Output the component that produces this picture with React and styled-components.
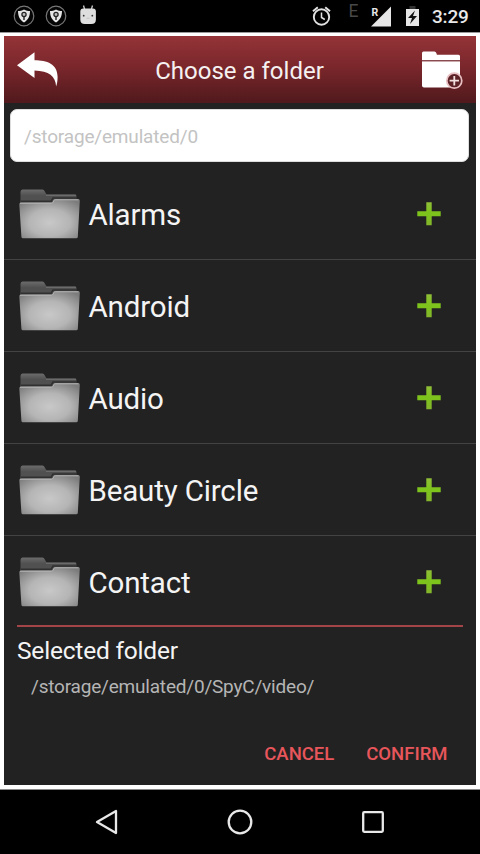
import React, {useState} from 'react';
import styled, {createGlobalStyle} from 'styled-components';

const GlobalStyle = createGlobalStyle`
    * {
        box-sizing: border-box;
    }

    body {
        margin: 0;
        background: #000;
        font-family: Roboto, "Liberation Sans", sans-serif;
    }

    button {
        padding: 0;
        border: none;
        background: none;
        font-family: inherit;
    }

    svg {
        display: block;
        flex: none;
    }
`;

const Screen = styled.div`
    width: 480px;
    height: 854px;
    display: flex;
    flex-direction: column;
    background: #000;
    overflow: hidden;
`;

const StatusBar = styled.div`
    height: 32px;
    flex: none;
    display: flex;
    justify-content: space-between;
    padding: 0 11px 0 13px;
`;

const Clock = styled.span`
    width: 37px;
    margin-left: 12px;
    color: #e8e8e8;
    font-size: 19px;
    font-weight: 500;
    line-height: 34px;
    letter-spacing: -0.2px;
`;

const StatusGroup = styled.div`
    display: flex;
`;

const Frame = styled.div`
    height: 758px;
    flex: none;
    padding: 3px 4px 4px;
    background: #fff;
    border-top: 1px solid #999;
    border-bottom: 1px solid #8a8a8a;
`;

const Panel = styled.div`
    height: 100%;
    display: flex;
    flex-direction: column;
    background: #222;
`;

const Header = styled.header`
    height: 67px;
    flex: none;
    display: flex;
    align-items: center;
    justify-content: space-between;
    padding: 0 12px;
    background: linear-gradient(#943438, #7b272c 45%, #50191c);
`;

const Title = styled.h1`
    margin: 2px 0 0 1px;
    color: #f5f1f1;
    font-size: 24px;
    font-weight: 400;
    line-height: 28px;
`;

const PathInput = styled.input`
    height: 53px;
    flex: none;
    margin: 6px 7px 6px 6px;
    padding: 2px 14px 0 13px;
    border: 1px solid #ddd;
    border-radius: 7px;
    outline: none;
    background: #fff;
    font-family: inherit;
    font-size: 19px;
    letter-spacing: -0.17px;

    &::placeholder {
        color: #c3c3c3;
        opacity: 1;
    }
`;

const FolderList = styled.ul`
    height: 457px;
    flex: none;
    margin: 0;
    padding: 0;
    list-style: none;
    overflow: hidden;
`;

const FolderRow = styled.li`
    height: 92px;
    display: flex;
    align-items: center;
    padding: 0 34px 0 14px;
    border-bottom: 1px solid #434343;
`;

const FolderName = styled.span`
    flex: 1;
    padding: 2px 0 0 8.5px;
    color: #f4f4f4;
    font-size: 29.5px;
    line-height: 36px;
    letter-spacing: -0.15px;
`;

const Footer = styled.footer`
    flex: 1;
    display: flex;
    flex-direction: column;
    margin: 0 13px;
    border-top: 2px solid #a24448;
`;

const SelectedLabel = styled.div`
    margin-top: 9px;
    color: #f4f4f4;
    font-size: 24.5px;
    line-height: 30px;
    letter-spacing: -0.2px;
`;

const SelectedPath = styled.div`
    margin: 9px 0 0 14px;
    color: #b5b5b5;
    font-size: 19px;
    line-height: 24px;
    letter-spacing: -0.2px;
`;

const Actions = styled.div`
    display: flex;
    justify-content: flex-end;
    gap: 32px;
    margin: 43px 15.5px 0 0;
`;

const ActionButton = styled.button`
    color: #e8565b;
    font-size: 18.5px;
    font-weight: 500;
    line-height: 24px;
`;

const NavBar = styled.nav`
    flex: 1;
    display: flex;
    justify-content: center;
    align-items: center;
    gap: 105px;
`;

const ShieldIcon = () => (
    <svg width="32" height="32" viewBox="0 0 32 32">
        <circle cx="11" cy="16" r="9.8" fill="#050505" stroke="#777" strokeWidth="1.2"/>
        <path d="M11 9.500c2 1.200 4 1.600 6 1.600 0 5-1.700 9-6 11.400-4.300-2.400-6-6.400-6-11.400 2 0 4-.4 6-1.600z" fill="#e6e6e6"/>
        <circle cx="11" cy="14.500" r="2.100" fill="#bbb" stroke="#222" strokeWidth="1.300"/>
        <path d="M11 16.500v3.500" stroke="#222" strokeWidth="1.400"/>
    </svg>
);

const RobotIcon = () => (
    <svg width="20" height="32" viewBox="77 0 20 32">
        <path d="M83.500 5.500l1.200 4M92.500 5.500l-1.200 4" stroke="#ccc" strokeWidth="1.300"/>
        <path d="M80.300 11.500q0-3 3-3h9.600q3 0 3 3v8q0 4.500-4.500 4.500h-6.600q-4.500 0-4.500-4.500z" fill="#dedede"/>
        <circle cx="83.700" cy="15.700" r=".9" fill="#333"/>
        <circle cx="92.300" cy="15.700" r=".9" fill="#333"/>
        <path d="M86.500 18.200h3" stroke="#c4c4c4"/>
    </svg>
);

const SignalIcons = () => (
    <svg width="112" height="32" viewBox="308 0 112 32">
        {/* alarm */}
        <g fill="none" stroke="#e2e2e2">
            <circle cx="321.500" cy="17" r="7.700" strokeWidth="1.900"/>
            <path d="M321.500 12.500v5l3.300 2" strokeWidth="1.500"/>
            <path d="M313 11.300l4.800-4M330 11.300l-4.800-4" strokeWidth="2"/>
        </g>
        <text x="348.500" y="17.300" fill="#484848" fontSize="17.500">E</text>
        {/* roaming signal */}
        <path d="M391 6.500v20h-20z" fill="#e6e6e6"/>
        <text x="371.500" y="16" fill="#e6e6e6" fontSize="10.500" fontWeight="700">R</text>
        {/* charging battery */}
        <path d="M409.500 6h6v3h-6z" fill="#333"/>
        <path d="M406 9h13v17h-13z" fill="#e6e6e6"/>
        <path d="M415 10.500l-7 7.500h4l-2 6 7-8h-4z" fill="#111"/>
    </svg>
);

const BackArrow = () => (
    <svg width="42" height="36" viewBox="16 52 42 36">
        <path d="M17 65.300L34.500 52.300v8C47 60.300 57.500 64 57.600 77c0 4-.6 7-1.500 9.500-.5-10.500-7.100-15.500-21.600-16v7.500z" fill="#fff"/>
    </svg>
);

const NewFolderIcon = () => (
    <svg width="44" height="42" viewBox="420 49 44 42">
        <path d="M422 60v-7q0-1.500 1.500-1.500h11q1.300 0 1.800 1.500l.6 1.700h21.600q1.500 0 1.500 1.500V60z" fill="#fff"/>
        <path d="M422 61.300h38V85.500q0 2-2 2h-34q-2 0-2-2z" fill="#fff"/>
        <path d="M422 60.600h38" stroke="#8a4b50" strokeWidth="1.200"/>
        <circle cx="454.300" cy="80.700" r="7.500" fill="#5c2226" stroke="#e8bfc2" strokeWidth="1.700"/>
        <path d="M454.300 76v9.400M449.600 80.700h9.400" stroke="#f4dfe0" strokeWidth="1.800"/>
    </svg>
);

const FolderIcon = () => (
    <svg width="62" height="52" viewBox="18 188 62 52">
        <defs>
            <linearGradient id="folderBack" x1="0" y1="0" x2="0" y2="1">
                <stop offset="0" stopColor="#6c6c6c"/>
                <stop offset=".3" stopColor="#505050"/>
            </linearGradient>
            <radialGradient id="folderFront" cx=".5" cy=".6" r=".68">
                <stop offset="0" stopColor="#c8c8c8"/>
                <stop offset=".5" stopColor="#b5b5b5"/>
                <stop offset="1" stopColor="#7c7c7c"/>
            </radialGradient>
        </defs>
        <path d="M20.500 210v-18q0-2.500 2-2.500h20q1.500 0 2 1.500l2 3.500h28.500q1.500 0 1.500 1.500v14z" fill="url(#folderBack)"/>
        <path d="M46 195.200h30" stroke="#777" strokeWidth="1"/>
        <path d="M21 201.300h30l2-3.300h24" fill="none" stroke="#303030" strokeWidth="1.500"/>
        <path d="M19.300 204q0-1.500 1.500-1.500h30.700q1 0 1.500-1l.7-1.500q.4-1 1.500-1h23q1.700 0 1.600 1.700L77.800 237q-.1 1.300-1.600 1.300H23q-1.500 0-1.600-1.500z" fill="url(#folderFront)"/>
        <path d="M20 203.300h31.500q1 0 1.500-1l.9-1.700q.4-.8 1.500-.8h23" fill="none" stroke="#b2b2b2" strokeWidth="1"/>
    </svg>
);

const PlusIcon = () => (
    <svg width="26" height="26" viewBox="0 0 26 26">
        <defs>
            <linearGradient id="plusFill" x1="0" y1="0" x2="0" y2="1">
                <stop offset="0" stopColor="#90bd38"/>
                <stop offset=".5" stopColor="#7cc41a"/>
                <stop offset="1" stopColor="#85b52d"/>
            </linearGradient>
        </defs>
        <path d="M10.300 1.300h5.400v9h9v5h-9v9h-5.400v-9h-9v-5h9z" fill="url(#plusFill)"/>
    </svg>
);

const folders = ["Alarms", "Android", "Audio", "Beauty Circle", "Contact"]

function App() {
    const [path, setPath] = useState("")

    return (<Screen>
        <GlobalStyle/>
        <StatusBar>
            <StatusGroup>
                <ShieldIcon/>
                <ShieldIcon/>
                <RobotIcon/>
            </StatusGroup>
            <StatusGroup>
                <SignalIcons/>
                <Clock>3:29</Clock>
            </StatusGroup>
        </StatusBar>
        <Frame>
            <Panel>
                <Header>
                    <button type={"button"} aria-label="Back"><BackArrow/></button>
                    <Title>Choose a folder</Title>
                    <button type={"button"} aria-label="New folder"><NewFolderIcon/></button>
                </Header>
                <PathInput placeholder="/storage/emulated/0" value={path} onChange={(e) => setPath(e.target.value)}/>
                <FolderList>
                    {folders.map(name => (
                        <FolderRow key={name}>
                            <FolderIcon/>
                            <FolderName>{name}</FolderName>
                            <PlusIcon/>
                        </FolderRow>
                    ))}
                </FolderList>
                <Footer>
                    <SelectedLabel>Selected folder</SelectedLabel>
                    <SelectedPath>/storage/emulated/0/SpyC/video/</SelectedPath>
                    <Actions>
                        <ActionButton type={"button"}>CANCEL</ActionButton>
                        <ActionButton type={"button"}>CONFIRM</ActionButton>
                    </Actions>
                </Footer>
            </Panel>
        </Frame>
        <NavBar>
            <svg width="28" height="28" viewBox="0 0 28 28" fill="none" stroke="#e8e8e8" strokeWidth="2.300" strokeLinejoin="round">
                <path d="M23 3v22L4 14z"/>
            </svg>
            <svg width="28" height="28" viewBox="0 0 28 28" fill="none" stroke="#e8e8e8" strokeWidth="2.300">
                <circle cx="14" cy="14" r="11.300"/>
            </svg>
            <svg width="28" height="28" viewBox="0 0 28 28" fill="none" stroke="#e8e8e8" strokeWidth="2.300">
                <rect x="4.200" y="4.200" width="19.600" height="19.600" rx="1"/>
            </svg>
        </NavBar>
    </Screen>);
}

export default App;
